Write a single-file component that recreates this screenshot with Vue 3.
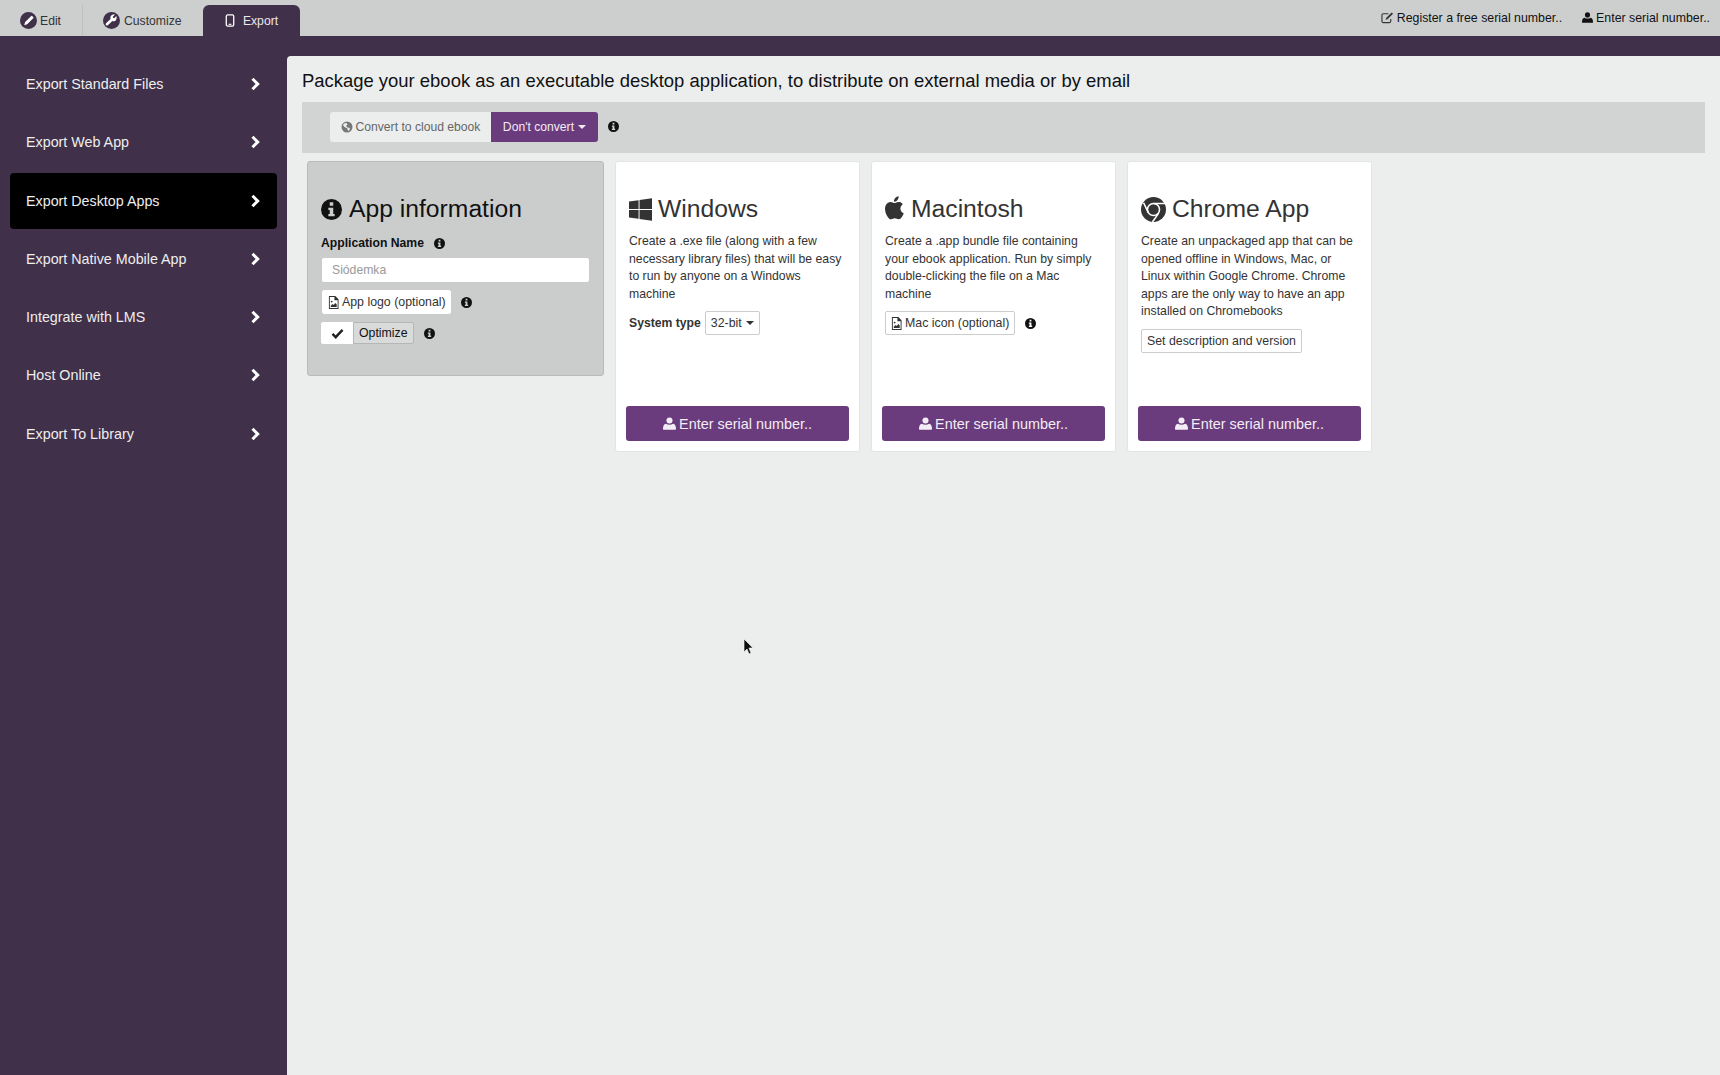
<template>
  <div class="app">
    <header class="topbar">
      <nav class="tabs">
        <a class="tab tab-edit">
          <span class="round-ic">
            <svg viewBox="0 0 20 20"><path d="M5 15.500l1-3.600 7-7a1 1 0 0 1 1.500 0l1 1a1 1 0 0 1 0 1.500l-7 7z" fill="#fff" /></svg>
          </span>
          Edit
        </a>
        <a class="tab tab-sep">
          <span class="round-ic">
            <svg viewBox="0 0 20 20"><path d="M15.800 4.800l-2.600 2.500-1.300-.4-.4-1.300 2.500-2.500c-1.700-.5-3.500 0-4.500 1.300-.9 1.100-1 2.500-.6 3.700L3.600 13.300a1.500 1.500 0 0 0 2.100 2.200l5.300-4.800c1.300.5 2.800.2 3.900-.8 1.100-1.200 1.400-2.700.9-5.100z" fill="#fff" /></svg>
          </span>
          Customize
        </a>
        <a class="tab tab-active">
          <svg class="phone" viewBox="0 0 10 14"><rect x="1" y="1" width="8" height="12" rx="1.500" fill="none" stroke="#fff" stroke-width="1.400" /><rect x="3.500" y="10.500" width="3" height="1.200" fill="#fff" /></svg>
          Export
        </a>
      </nav>
      <div class="top-links">
        <a class="top-link">
          <svg class="ic14" viewBox="0 0 14 14"><path d="M10.500 8.500v2.500a1.500 1.500 0 0 1-1.500 1.500H2.500A1.500 1.500 0 0 1 1 11V4.500A1.500 1.500 0 0 1 2.500 3H8" fill="none" stroke="#333" stroke-width="1.200" /><path d="M5 9.500l.5-2L11.500 1.500l1.500 1.500-6 6z" fill="#333" /></svg>
          Register a free serial number..
        </a>
        <a class="top-link">
          <svg class="ic-top-user" viewBox="0 0 12 12"><circle cx="6" cy="3.200" r="2.800" fill="#111" /><path d="M.8 11.800c-.6 0-.8-.4-.8-1 0-2.400.7-4.300 2.700-4.600.9.700 2 1 3.300 1s2.400-.3 3.300-1c2 .3 2.700 2.200 2.700 4.600 0 .6-.3 1-.8 1z" fill="#111" /></svg>
          Enter serial number..
        </a>
      </div>
    </header>

    <div class="body">
      <aside class="sidebar">
        <a v-for="item in menu" :key="item" class="side-item" :class="{ active: item === 'Export Desktop Apps' }">
          <span>{{ item }}</span>
          <svg class="chev" viewBox="0 0 10 14"><path d="M2.500 1.800L7.700 7l-5.200 5.200" fill="none" stroke="#fff" stroke-width="3" /></svg>
        </a>
      </aside>

      <main class="content">
        <h1 class="page-title">Package your ebook as an executable desktop application, to distribute on external media or by email</h1>

        <div class="convert-bar">
          <div class="btn-group">
            <span class="convert-off">
              <svg class="ic12" viewBox="0 0 12 12"><circle cx="6" cy="6" r="5.500" fill="#777" /><path d="M3 2.500l2.500-.5 1 1.500-1.500 1.500 1.500 1.500 2.500.5-1 3-1.500-1V7.500L3.500 6 2 4z" fill="#eee" /></svg>
              Convert to cloud ebook
            </span>
            <span class="convert-on">Don't convert <i class="caret"></i></span>
          </div>
          <svg class="info" viewBox="0 0 12 12"><use href="#info-c" /></svg>
        </div>

        <div class="cards">
          <section class="card card-info">
            <h2 class="card-title card-title-info">
              <svg class="title-ic ic-info" viewBox="0 0 12 12"><use href="#info-c" /></svg>
              App information
            </h2>
            <label class="field-label">Application Name <svg class="info" viewBox="0 0 12 12"><use href="#info-c" /></svg></label>
            <input class="name-input" placeholder="Siódemka" />
            <div class="row row-logo">
              <span class="plain-btn plain-borderless">
                <svg class="ic-file" viewBox="0 0 12 14"><use href="#file-img" /></svg>
                App logo (optional)
              </span>
              <svg class="info" viewBox="0 0 12 12"><use href="#info-c" /></svg>
            </div>
            <div class="row">
              <span class="toggle">
                <span class="toggle-check">
                  <svg viewBox="0 0 14 12"><path d="M1.500 6.500l3.500 3.500 7.500-8" fill="none" stroke="#222" stroke-width="2.600" /></svg>
                </span>
                <span class="toggle-label">Optimize</span>
              </span>
              <svg class="info" viewBox="0 0 12 12"><use href="#info-c" /></svg>
            </div>
          </section>

          <section v-for="p in platforms" :key="p.title" class="card">
            <h2 class="card-title">
              <svg v-if="p.title === 'Windows'" class="title-ic ic-win" viewBox="0 0 24 24">
                <path d="M0 3.700l10-1.400v9.200H0zM11 2.100L24 .3v11.200H11zM0 12.500h10v9.200L0 20.300zM11 12.500h13v11.200l-13-1.800z" fill="#333" />
              </svg>
              <svg v-else-if="p.title === 'Macintosh'" class="title-ic ic-apple" viewBox="4.800 2.500 16.500 19.500">
                <path d="M17.500 12.700c0-2.300 1.900-3.500 2-3.600-1.100-1.600-2.800-1.800-3.400-1.800-1.400-.1-2.800.9-3.500.9-.7 0-1.900-.9-3.100-.9-1.600 0-3.100.9-3.900 2.300-1.700 2.900-.4 7.200 1.200 9.600.8 1.200 1.800 2.500 3 2.400 1.200 0 1.700-.8 3.100-.8 1.500 0 1.900.8 3.200.8 1.300 0 2.100-1.200 2.900-2.300.9-1.300 1.300-2.600 1.300-2.700-.1 0-2.800-1-2.800-3.900zM15.100 5.600c.7-.8 1.100-1.900 1-3.100-1 0-2.200.7-2.900 1.500-.6.700-1.200 1.900-1 3 1.100.1 2.200-.6 2.900-1.400z" fill="#333" />
              </svg>
              <svg v-else class="title-ic ic-chrome" viewBox="0 0 24 24">
                <circle cx="12" cy="12" r="12" fill="#333" />
                <circle cx="12" cy="12" r="5.800" fill="none" stroke="#fff" stroke-width="1.500" />
                <path d="M12 6.200h11M7 15L2.500 5.500M17 15.500l-6 8.500" stroke="#fff" stroke-width="1.500" fill="none" />
              </svg>
              {{ p.title }}
            </h2>
            <p class="card-text">{{ p.text }}</p>

            <div v-if="p.title === 'Windows'" class="row">
              <b class="sys-label">System type</b>
              <span class="plain-btn">32-bit <i class="caret caret-dark"></i></span>
            </div>
            <div v-else-if="p.title === 'Macintosh'" class="row">
              <span class="plain-btn">
                <svg class="ic-file" viewBox="0 0 12 14"><use href="#file-img" /></svg>
                Mac icon (optional)
              </span>
              <svg class="info" viewBox="0 0 12 12"><use href="#info-c" /></svg>
            </div>
            <div v-else class="row">
              <span class="plain-btn">Set description and version</span>
            </div>

            <a class="serial-btn">
              <svg class="ic-user" viewBox="0 0 12 12"><circle cx="6" cy="3.200" r="2.800" fill="#f3edf5" /><path d="M.8 11.800c-.6 0-.8-.4-.8-1 0-2.400.7-4.300 2.700-4.600.9.700 2 1 3.300 1s2.400-.3 3.300-1c2 .3 2.700 2.200 2.700 4.600 0 .6-.3 1-.8 1z" fill="#f3edf5" /></svg>
              Enter serial number..
            </a>
          </section>
        </div>

        <svg class="cursor" viewBox="0 0 12 18"><path d="M1 1v13l3-3 2 5 2-1-2-5h4z" fill="#111" stroke="#fff" stroke-width=".6" /></svg>
      </main>
    </div>

    <svg class="defs" width="0" height="0">
      <defs>
        <symbol id="info-c" viewBox="0 0 12 12">
          <path fill-rule="evenodd" d="M6 0a6 6 0 1 1 0 12A6 6 0 0 1 6 0zM5 1.800v2h2v-2zM4.200 5v1.300h.8v2.200h-.8v1.300h3.600V8.500H7V5z" fill="#111" />
        </symbol>
        <symbol id="file-img" viewBox="0 0 12 14">
          <path fill-rule="evenodd" d="M1 0h7l3.500 3.500V14H1zM2 1v12h8.500V4.500H7V1z" fill="#333" />
          <path d="M3 12v-1.500l1.800-2 1.300 1.300 2-2.300 1.400 1.800V12z" fill="#333" />
          <circle cx="4" cy="6" r="1" fill="#333" />
        </symbol>
      </defs>
    </svg>
  </div>
</template>

<script setup>
const menu = [
  'Export Standard Files',
  'Export Web App',
  'Export Desktop Apps',
  'Export Native Mobile App',
  'Integrate with LMS',
  'Host Online',
  'Export To Library',
]

const platforms = [
  { title: 'Windows', text: 'Create a .exe file (along with a few necessary library files) that will be easy to run by anyone on a Windows machine' },
  { title: 'Macintosh', text: 'Create a .app bundle file containing your ebook application. Run by simply double-clicking the file on a Mac machine' },
  { title: 'Chrome App', text: 'Create an unpackaged app that can be opened offline in Windows, Mac, or Linux within Google Chrome. Chrome apps are the only way to have an app installed on Chromebooks' },
]
</script>

<style>
html, body {
  margin: 0;
  background: #eceeee;
}
</style>

<style scoped>
.app {
  width: 1720px;
  height: 1075px;
  overflow: hidden;
  display: flex;
  flex-direction: column;
  font-family: "Liberation Sans", Arial, sans-serif;
  color: #333;
}
.defs { position: absolute; }

.topbar {
  height: 36px;
  flex: none;
  background: #cdcfcf;
  display: flex;
  justify-content: space-between;
}
.tabs {
  display: flex;
  align-items: flex-end;
  padding-left: 20px;
}
.tab {
  height: 31px;
  display: flex;
  align-items: center;
  gap: 3px;
  font-size: 12.200px;
  color: #333;
  box-sizing: border-box;
}
.tab-edit { width: 62px; }
.tab-sep {
  width: 121px;
  gap: 4px;
  border-left: 1px solid #bfc1c1;
  padding-left: 20px;
}
.tab-active {
  width: 97px;
  justify-content: center;
  gap: 8px;
  background: #403049;
  color: #ece8ee;
  border-radius: 6px 6px 0 0;
}
.round-ic {
  width: 17px;
  height: 17px;
  border-radius: 50%;
  background: #403049;
  display: block;
}
.round-ic svg { display: block; width: 17px; height: 17px; }
.phone { width: 10px; height: 13px; }

.top-links {
  display: flex;
  align-items: center;
  gap: 20px;
  padding-right: 10px;
  padding-bottom: 1px;
}
.top-link {
  display: flex;
  align-items: center;
  gap: 3px;
  font-size: 12.350px;
  color: #111;
}
.ic14 { width: 13px; height: 13px; }
.ic12 { width: 12px; height: 12px; flex: none; }
.ic-top-user { width: 11px; height: 11px; flex: none; }

.body {
  flex: 1;
  display: flex;
  background: #403049;
  padding-top: 20px;
  min-height: 0;
}
.sidebar {
  width: 287px;
  flex: none;
  padding: 0 10px;
  box-sizing: border-box;
  display: flex;
  flex-direction: column;
  gap: 2.300px;
}
.side-item {
  height: 56px;
  padding: 0 17px 0 16px;
  display: flex;
  align-items: center;
  justify-content: space-between;
  font-size: 14.300px;
  color: #eee;
  border-radius: 4px;
}
.side-item.active { background: #000; }
.chev { width: 10px; height: 14px; }

.content {
  flex: 1;
  background: #eceeee;
  position: relative;
  padding: 0 15px;
  border-top-left-radius: 4px;
}
.page-title {
  margin: 0;
  padding-top: 4px;
  font-size: 18.440px;
  font-weight: 400;
  color: #111;
  line-height: 42px;
}
.convert-bar {
  height: 51px;
  box-sizing: border-box;
  padding-bottom: 2px;
  background: #d2d4d4;
  display: flex;
  align-items: center;
  padding-left: 28px;
  gap: 10px;
}
.btn-group {
  display: flex;
  height: 30px;
  font-size: 12.150px;
  line-height: 30px;
}
.convert-off {
  display: flex;
  align-items: center;
  gap: 3px;
  padding: 0 10.500px;
  background: #eceeee;
  color: #666;
  border-radius: 3px 0 0 3px;
}
.convert-on {
  padding: 0 12px;
  background: #6b3c7d;
  color: #f1ebf3;
  border-radius: 0 3px 3px 0;
}
.caret {
  display: inline-block;
  margin-left: 1px;
  border-left: 4px solid transparent;
  border-right: 4px solid transparent;
  border-top: 4px solid #f1ebf3;
  vertical-align: middle;
}
.caret-dark { border-top-color: #333; }
.info { width: 11px; height: 11px; flex: none; }

.cards {
  display: flex;
  gap: 11px;
  padding: 8px 0 0 5px;
  align-items: flex-start;
}
.card {
  width: 245px;
  height: 291px;
  box-sizing: border-box;
  background: #fff;
  border: 1px solid #e3e5e5;
  border-radius: 3px;
  padding: 30px 13px 0;
  position: relative;
}
.card-info {
  width: 297px;
  height: 215px;
  background: #cbcdcd;
  border-color: #b9bbbb;
  color: #111;
}
.card-title {
  margin: 0;
  font-size: 24.700px;
  font-weight: 400;
  line-height: 34px;
  display: flex;
  align-items: center;
  gap: 6px;
}
.card-title-info { gap: 7px; }
.title-ic { flex: none; }
.ic-info { width: 21px; height: 21px; }
.ic-win { width: 23px; height: 23px; }
.ic-apple { width: 20px; height: 24px; margin-top: -3px; }
.ic-chrome { width: 25px; height: 25px; }
.card-text {
  margin: 7px 0 0;
  font-size: 12.250px;
  line-height: 17.500px;
}
.field-label {
  display: flex;
  align-items: center;
  gap: 10px;
  margin-top: 10px;
  font-size: 12.200px;
  font-weight: 700;
}
.name-input {
  display: block;
  width: calc(100% - 2px);
  box-sizing: border-box;
  height: 24px;
  margin: 8px 1px 0;
  border: 0;
  border-radius: 2px;
  padding: 0 10px;
  font: 12.200px "Liberation Sans", Arial, sans-serif;
  background: #fff;
}
.name-input::placeholder { color: #999; }
.row {
  display: flex;
  align-items: center;
  gap: 10px;
  margin-top: 8px;
}
.row-logo { padding-left: 1px; }
.plain-btn {
  display: inline-flex;
  align-items: center;
  gap: 3px;
  height: 22px;
  padding: 0 5px;
  background: #fff;
  border: 1px solid #ccc;
  border-radius: 2px;
  font-size: 12.350px;
  color: #333;
}
.plain-borderless { border-color: #fff; gap: 3px; padding-right: 4px; }
.sys-label { font-size: 12.200px; margin-right: -6px; }
.ic-file { width: 11px; height: 13px; }
.ic-user { width: 13px; height: 13px; flex: none; }
.toggle { display: flex; height: 22px; font-size: 12.300px; }
.toggle-check {
  width: 32px;
  background: #fff;
  border-radius: 2px 0 0 2px;
  display: flex;
  align-items: center;
  justify-content: center;
}
.toggle-check svg { width: 13px; height: 11px; }
.toggle-label {
  padding: 0 5px;
  background: #d9dbdb;
  line-height: 20px;
  border: 1px solid #b5b7b7;
  border-radius: 0 2px 2px 0;
}
.serial-btn {
  position: absolute;
  left: 10px;
  right: 10px;
  bottom: 10px;
  height: 35px;
  background: #6b3c7d;
  border-radius: 3px;
  color: #f3edf5;
  font-size: 14.400px;
  display: flex;
  align-items: center;
  justify-content: center;
  gap: 3px;
}
.cursor {
  position: absolute;
  left: 456px;
  top: 582px;
  width: 12px;
  height: 18px;
}
</style>
